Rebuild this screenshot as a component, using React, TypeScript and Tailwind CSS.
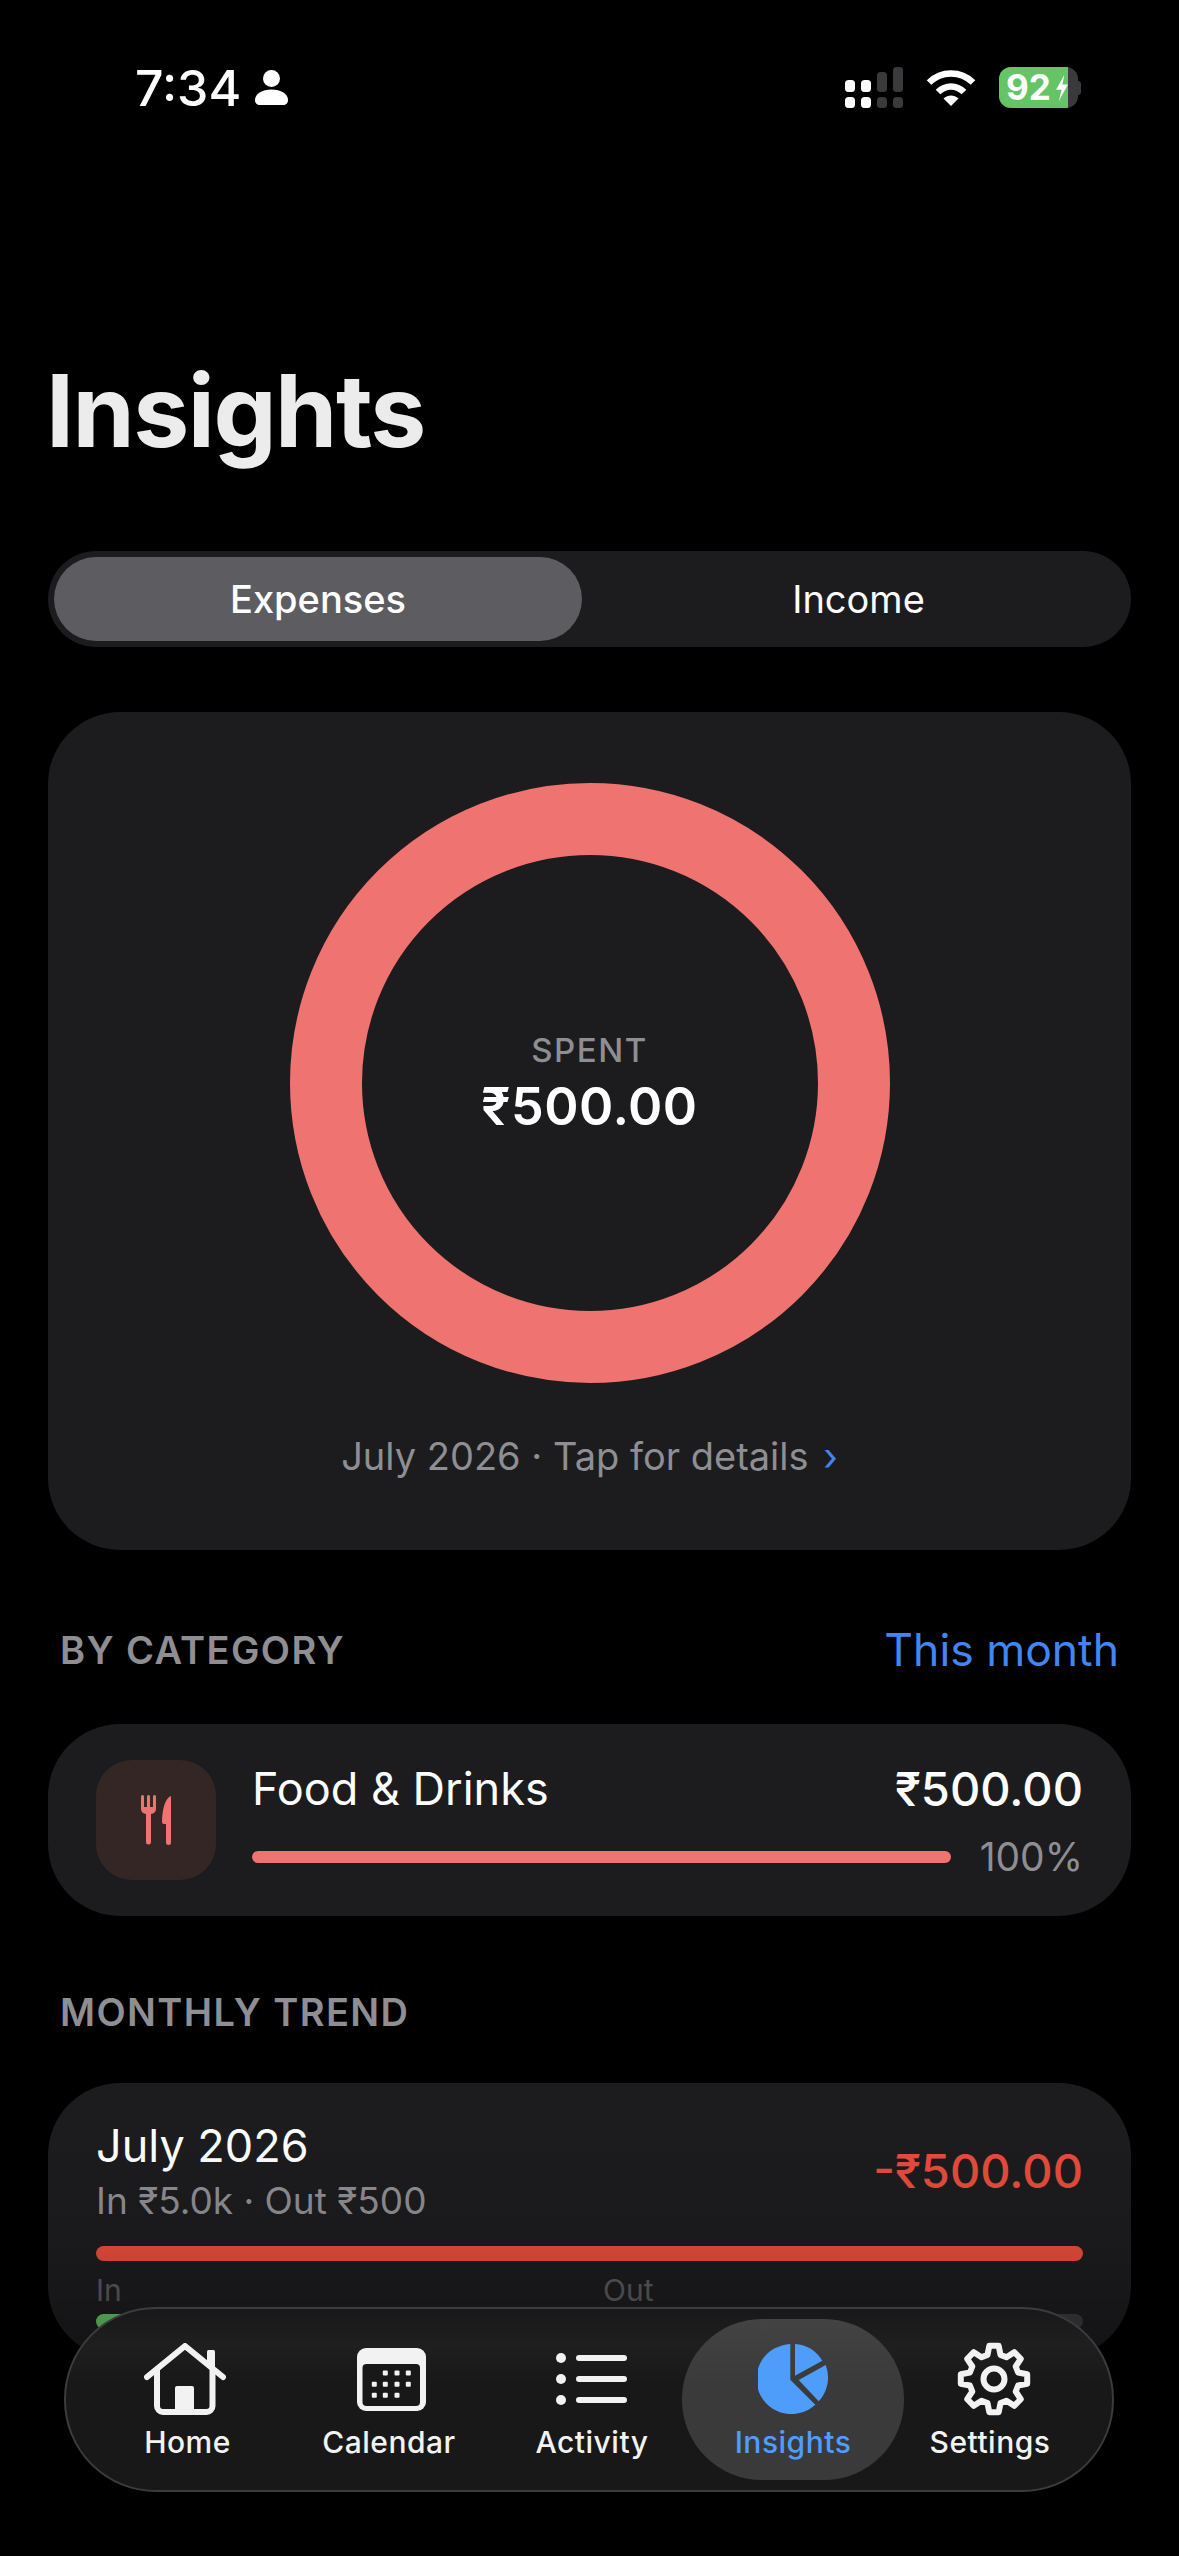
import React from 'react';

const font = "font-['Inter','Liberation_Sans',sans-serif]";

const gearPath = (() => {
  const pts: string[] = [];
  const cx = 37;
  const cy = 37;
  for (let i = 0; i < 8; i++) {
    const a = (i * 45 * Math.PI) / 180;
    const list: [number, number][] = [
      [-15, 25],
      [-8, 33.5],
      [8, 33.5],
      [15, 25],
    ];
    list.forEach(([d, r]) => {
      const t = a + (d * Math.PI) / 180;
      pts.push(`${(cx + r * Math.sin(t)).toFixed(1)} ${(cy - r * Math.cos(t)).toFixed(1)}`);
    });
  }
  return `M${pts.join(' L')} Z`;
})();

const Signal = () => (
  <svg width="58" height="41" viewBox="0 0 58 41">
    <rect x="0" y="13" width="10" height="12" rx="3.5" fill="#fff" />
    <rect x="0" y="30" width="10" height="11" rx="3.5" fill="#fff" />
    <rect x="16" y="13" width="10" height="12" rx="3.5" fill="#fff" />
    <rect x="16" y="30" width="10" height="11" rx="3.5" fill="#fff" />
    <rect x="32" y="5" width="10" height="20" rx="3.5" fill="#3a3a3c" />
    <rect x="32" y="30" width="10" height="11" rx="3.5" fill="#3a3a3c" />
    <rect x="48" y="0" width="10" height="25" rx="3.5" fill="#3a3a3c" />
    <rect x="48" y="30" width="10" height="11" rx="3.5" fill="#3a3a3c" />
  </svg>
);

const Wifi = () => (
  <svg width="50" height="37" viewBox="0 0 50 37" fill="none">
    <path d="M3 13.5C15.5 1.5 34.5 1.5 47 13.5" stroke="#fff" strokeWidth="6.5" />
    <path d="M12 23C19.5 15.5 30.5 15.5 38 23" stroke="#fff" strokeWidth="6.5" />
    <path d="M17.5 29.5C22 25.5 28 25.5 32.5 29.5L25 37Z" fill="#fff" />
  </svg>
);

const Battery = () => (
  <div className="flex items-center">
    <div className="relative flex h-[41px] w-[79px] items-center overflow-hidden rounded-[12px] bg-[#3a3a3c]">
      <div className="flex h-full w-[69px] items-center bg-[#65c466] pl-[7px]">
        <span className="text-[35px] leading-none font-bold text-white">92</span>
      </div>
      <svg className="absolute top-[8px] left-[57px]" width="12" height="26" viewBox="0 0 13 30" preserveAspectRatio="none">
        <path d="M9 0L0 17H6L3 30L13 11H7Z" fill="#fff" />
      </svg>
    </div>
    <div className="h-[14px] w-[3px] rounded-r-full bg-[#3a3a3c]" />
  </div>
);

const ForkKnife = () => (
  <svg width="30" height="50" viewBox="0 0 30 50" fill="#ef7370">
    <path d="M0 1.500a1.500 1.500 0 0 1 3 0V12H6V1.500a1.500 1.500 0 0 1 3 0V12h3V1.500a1.500 1.500 0 0 1 3 0V14a5 5 0 0 1-5 5V47a2.500 2.500 0 0 1-5 0V19a5 5 0 0 1-5-5Z" />
    <path d="M30 1V47.500a2.500 2.500 0 0 1-5 0V29H23a2 2 0 0 1-2-2C21 15 24 3 30 1Z" />
  </svg>
);

const HomeIcon = () => (
  <svg className="-ml-[5px]" width="82" height="72" viewBox="0 0 82 72" fill="none">
    <rect x="63" y="7" width="8" height="18" rx="1.500" fill="#f2f2f2" />
    <path d="M3 34L41 3L79 34" stroke="#f2f2f2" strokeWidth="6" strokeLinecap="round" strokeLinejoin="round" />
    <path d="M13 25V63a6 6 0 0 0 6 6H62.500a6 6 0 0 0 6-6V25" stroke="#f2f2f2" strokeWidth="6" />
    <path d="M31 45a2 2 0 0 1 2-2H48a2 2 0 0 1 2 2V69H31Z" fill="#f2f2f2" />
  </svg>
);

const CalendarIcon = () => {
  const dots = [
    [28.3, 25], [40, 25], [51.3, 25],
    [17.3, 36.3], [28.3, 36.3], [40, 36.3], [51.3, 36.3],
    [17.3, 47.3], [28.3, 47.3], [40, 47.3],
  ];
  return (
    <svg className="ml-[5px]" width="69" height="63" viewBox="0 0 69 63">
      <rect width="69" height="63" rx="9" fill="#f2f2f2" />
      <rect x="5.500" y="16" width="57.500" height="42" rx="4" fill="#181818" />
      {dots.map(([x, y]) => (
        <rect key={`${x}-${y}`} x={x - 2.500} y={y - 2.500} width="5" height="5" rx="1" fill="#f2f2f2" />
      ))}
    </svg>
  );
};

const ListIcon = () => (
  <svg width="72" height="52" viewBox="0 0 72 52" fill="#f2f2f2">
    <circle cx="5" cy="5" r="5" />
    <circle cx="5" cy="26" r="5" />
    <circle cx="5" cy="47" r="5" />
    <rect x="20" y="2" width="51" height="6" rx="3" />
    <rect x="20" y="23" width="51" height="6" rx="3" />
    <rect x="20" y="44" width="51" height="6" rx="3" />
  </svg>
);

const PieIcon = () => (
  <svg width="70" height="70" viewBox="0 0 70 70" fill="#4f9dfb">
    <path d="M32.300 0.100V35.700L57.300 60.700A35 35 0 1 1 32.300 0.100Z" />
    <path d="M37 0V31.700L64.300 16.700A35 35 0 0 0 37 0Z" />
    <path d="M67.700 21L40.700 36L60.700 57.300A35 35 0 0 0 67.700 21Z" />
  </svg>
);

const GearIcon = () => (
  <svg className="ml-[7px]" width="74" height="74" viewBox="0 0 74 74" fill="none" stroke="#f2f2f2" strokeWidth="6" strokeLinejoin="round">
    <path d={gearPath} />
    <circle cx="37" cy="37" r="10.500" />
  </svg>
);

const tabs = [
  { label: 'Home', icon: <HomeIcon />, w: 'w-[201px]' },
  { label: 'Calendar', icon: <CalendarIcon />, w: 'w-[202px]' },
  { label: 'Activity', icon: <ListIcon />, w: 'w-[192px] pl-[12px]' },
  { label: 'Insights', icon: <PieIcon />, w: 'w-[222px]', active: true },
  { label: 'Settings', icon: <GearIcon />, w: 'w-[172px]' },
];

export default function App() {
  return (
    <div className={`${font} relative h-[2556px] w-[1179px] overflow-hidden bg-black text-white`}>
      {/* status bar */}
      <div className="mt-[54px] flex h-[67px] items-center pr-[98px] pl-[135px]">
        <span className="text-[50px] leading-none font-medium">7:34</span>
        <svg className="ml-[14px]" width="33" height="35" viewBox="0 0 33 35" fill="#fff">
          <circle cx="16.500" cy="8.500" r="8.500" />
          <path d="M0 30C0 24 7 19.500 16.500 19.500S33 24 33 30C33 33.500 31 35 28 35H5C2 35 0 33.500 0 30Z" />
        </svg>
        <div className="ml-auto flex items-center gap-[23px]">
          <Signal />
          <Wifi />
          <Battery />
        </div>
      </div>

      <div className="px-[48px] pt-[232px]">
        <h1 className="-ml-[2px] text-[100px] leading-[116px] font-bold tracking-[-1.5px] text-[#ececec]">Insights</h1>

        {/* segment */}
        <div className="mt-[82px] flex h-[96px] items-center rounded-[48px] bg-[#1c1c1e] p-[6px]">
          <div className="flex h-[84px] w-[528px] items-center justify-center rounded-[42px] bg-[#5c5c61] text-[38px] font-medium">Expenses</div>
          <div className="flex flex-1 items-center justify-center pl-[10px] text-[38px]">Income</div>
        </div>

        {/* donut card */}
        <div className="mt-[65px] flex h-[838px] flex-col items-center rounded-[72px] bg-[#1c1c1e] pt-[71px]">
          <div className="flex h-[600px] w-[600px] flex-col items-center justify-center rounded-full border-[72px] border-[#ef7370]">
            <span className="text-[33px] leading-[40px] font-medium tracking-[1.5px] text-[#8e8e93]">SPENT</span>
            <span className="mt-[7px] text-[52px] leading-[60px] font-semibold tracking-[0.5px]">₹500.00</span>
          </div>
          <div className="mt-[51px] text-[38px] leading-[44px] text-[#8e8e93]">
            July 2026 · Tap for details <span className="ml-[4px] text-[#4285f4]">›</span>
          </div>
        </div>

        {/* by category */}
        <div className="mt-[78px] flex items-center justify-between px-[12px]">
          <span className="text-[38px] leading-[44px] font-semibold tracking-[1.4px] text-[#8e8e93]">BY CATEGORY</span>
          <span className="text-[44.5px] leading-[44px] text-[#4285f4]">This month</span>
        </div>
        <div className="mt-[52px] flex h-[192px] items-center rounded-[72px] bg-[#1c1c1e] px-[48px]">
          <div className="flex h-[120px] w-[120px] items-center justify-center rounded-[36px] bg-[#352626]">
            <ForkKnife />
          </div>
          <div className="ml-[36px] flex-1">
            <div className="flex items-center justify-between leading-[54px]">
              <span className="text-[45px]">Food &amp; Drinks</span>
              <span className="text-[47px] font-medium">₹500.00</span>
            </div>
            <div className="mt-[19px] flex items-center gap-[29px]">
              <div className="h-[12px] flex-1 rounded-full bg-[#ef7370]" />
              <span className="text-[39px] leading-[44px] text-[#8e8e93]">100%</span>
            </div>
          </div>
        </div>

        {/* monthly trend */}
        <div className="mt-[74px] px-[12px] text-[38px] leading-[44px] font-semibold tracking-[1.4px] text-[#8e8e93]">MONTHLY TREND</div>
        <div className="mt-[49px] h-[275px] rounded-[72px] bg-[#1c1c1e] px-[48px] pt-[36px]">
          <div className="flex items-center justify-between">
            <div>
              <div className="text-[45px] leading-[54px]">July 2026</div>
              <div className="mt-[5px] text-[37px] leading-[46px] text-[#8e8e93]">In ₹5.0k · Out ₹500</div>
            </div>
            <span className="text-[47px] font-medium text-[#e74c3c]">-₹500.00</span>
          </div>
          <div className="mt-[22px] h-[15px] rounded-full bg-[#e74c3c]" />
          <div className="mt-[11px] flex text-[30px] leading-[36px] text-[#5a5a5e]">
            <div className="w-[507px]">
              <span>In</span>
              <div className="mt-[6px] h-[15px] rounded-full bg-[#65c466]" />
            </div>
            <div className="flex-1">
              <span>Out</span>
              <div className="mt-[6px] h-[15px] rounded-full bg-[#3a3a3c]" />
            </div>
          </div>
        </div>
      </div>

      {/* fade behind the tab bar */}
      <div className="absolute inset-x-0 top-[2130px] bottom-0 bg-gradient-to-b from-transparent via-black/10 via-[28%] to-black/70" />

      {/* tab bar */}
      <nav className="absolute top-[2307px] left-[64px] flex h-[185px] w-[1050px] items-center rounded-[92px] border-2 border-[#3c3c3e] bg-gradient-to-b from-[#181818] via-[#1f1f1f] via-[20%] to-[#181818] to-[40%] pl-[21px]">
        {tabs.map((tab) => (
          <div
            key={tab.label}
            className={`flex h-[161px] ${tab.w} shrink-0 flex-col items-center rounded-[80px] pt-[22px] ${tab.active ? 'bg-gradient-to-b from-[#434343] to-[#3a3a3a] to-[40%]' : ''}`}
          >
            <div className="flex h-[76px] items-center justify-center">{tab.icon}</div>
            <span className={`mt-[7px] text-[30px] leading-[36px] font-medium tracking-[0.5px] ${tab.active ? 'text-[#4f9dfb]' : 'text-[#f2f2f2]'}`}>
              {tab.label}
            </span>
          </div>
        ))}
      </nav>
    </div>
  );
}
